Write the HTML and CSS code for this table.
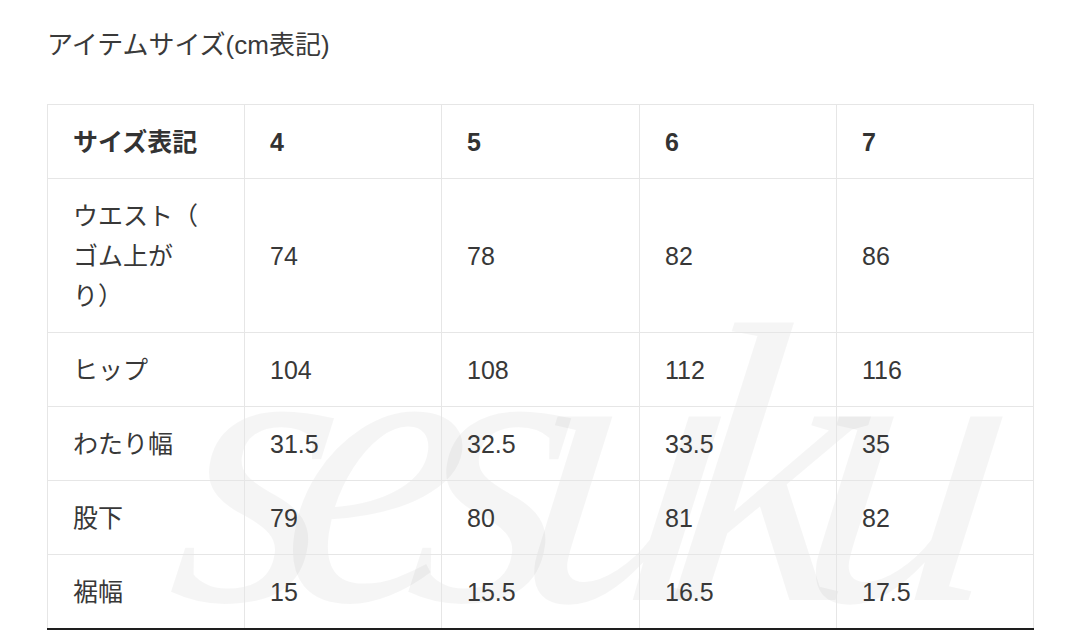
FILE: index.html
```html
<!DOCTYPE html>
<html lang="ja">
<head>
<meta charset="utf-8">
<title>アイテムサイズ</title>
<link rel="stylesheet" href="styles.css">
</head>
<body>
<div class="page">
  <h2 class="title">アイテムサイズ(cm表記)</h2>
  <div class="table-wrap">
    <table class="size-table">
      <colgroup>
        <col class="c1"><col class="c2"><col class="c3"><col class="c4"><col class="c5">
      </colgroup>
      <tr class="head">
        <th>サイズ表記</th><th>4</th><th>5</th><th>6</th><th>7</th>
      </tr>
      <tr>
        <td>ウエスト（<br>ゴム上が<br>り）</td><td>74</td><td>78</td><td>82</td><td>86</td>
      </tr>
      <tr>
        <td>ヒップ</td><td>104</td><td>108</td><td>112</td><td>116</td>
      </tr>
      <tr>
        <td>わたり幅</td><td>31.5</td><td>32.5</td><td>33.5</td><td>35</td>
      </tr>
      <tr>
        <td>股下</td><td>79</td><td>80</td><td>81</td><td>82</td>
      </tr>
      <tr>
        <td>裾幅</td><td>15</td><td>15.5</td><td>16.5</td><td>17.5</td>
      </tr>
    </table>
    <svg class="watermark" width="920" height="310" viewBox="0 0 920 310" aria-hidden="true">
      <text class="watermark-text" transform="translate(40 296) skewX(-8)">sesuku</text>
    </svg>
  </div>
</div>
</body>
</html>
```

FILE: styles.css
```css
html, body {
  margin: 0;
  padding: 0;
  background: #ffffff;
  overflow: hidden;
}

body {
  width: 1080px;
  height: 644px;
  font-family: "Liberation Sans", "Noto Sans CJK JP", sans-serif;
  color: #333333;
}

.page {
  padding: 27px 47px 0 47px;
}

.title {
  margin: 0;
  font-size: 26px;
  font-weight: normal;
  line-height: 36px;
  color: #3a3a3a;
}

.table-wrap {
  position: relative;
  margin-top: 41px;
  width: 986px;
}

.size-table {
  position: relative;
  z-index: 1;
  border-collapse: collapse;
  width: 986px;
  table-layout: fixed;
  font-size: 25px;
  line-height: 40px;
  border-bottom: 2px solid #1e1e1e;
}

.size-table col { width: 197px; }
.size-table col.c3 { width: 198px; }

.size-table th,
.size-table td {
  border: 1px solid #e6e6e6;
  padding: 17px 20px 16px 25px;
  text-align: left;
  vertical-align: middle;
  color: #383838;
}

.size-table tr:last-child td {
  border-bottom: 2px solid #1e1e1e;
}

.size-table th {
  font-weight: bold;
  color: #333333;
}

.watermark {
  position: absolute;
  z-index: 0;
  left: 78px;
  top: 200px;
  overflow: hidden;
  pointer-events: none;
}

.watermark-text {
  font-family: "Liberation Serif", serif;
  font-style: italic;
  font-size: 400px;
  letter-spacing: -48px;
  fill: rgba(0, 0, 0, 0.04);
}
```
